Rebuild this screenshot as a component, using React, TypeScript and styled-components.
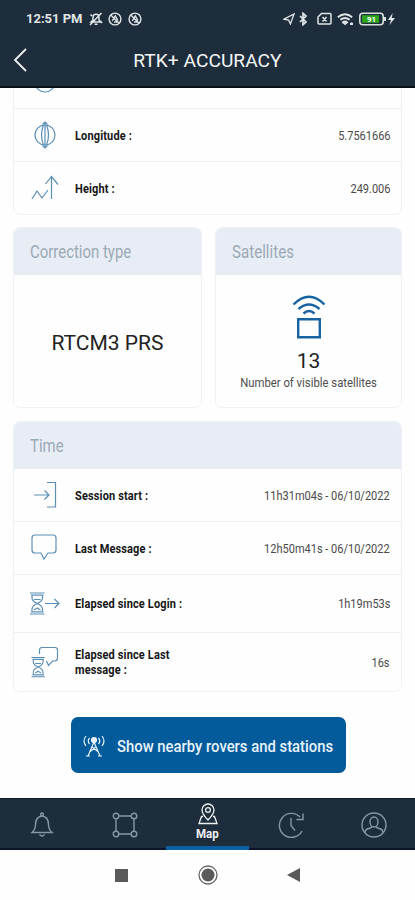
import React from "react";
import styled, { createGlobalStyle } from "styled-components";

const GlobalStyle = createGlobalStyle`
  * { box-sizing: border-box; }
  body { margin: 0; background: #fefefe; font-family: Roboto, "Liberation Sans", sans-serif; }
`;

const Screen = styled.div`
  width: 415px;
  height: 900px;
  display: flex;
  flex-direction: column;
  overflow: hidden;
  background: #fefefe;
`;

const Header = styled.header`
  height: 88px;
  flex: none;
  background: #1e2d3b;
  border-bottom: 2px solid #080f16;
`;

const StatusBar = styled.div`
  height: 38px;
  padding: 0 19px 0 26px;
  display: flex;
  align-items: center;
  justify-content: space-between;
`;

const StatusGroup = styled.div<{ $gap: number }>`
  display: flex;
  align-items: center;
  gap: ${(p) => p.$gap}px;
  color: #e0e5e8;
`;

const Clock = styled.span`
  font-size: 13px;
  font-weight: 700;
  width: 57px;
  white-space: nowrap;
  line-height: 16px;
`;

const TitleBar = styled.div`
  height: 44px;
  display: grid;
  grid-template-columns: 40px 1fr 40px;
  align-items: center;
`;

const Back = styled.button`
  padding: 0 0 0 13px;
  border: 0;
  background: none;
  display: flex;
`;

const Title = styled.h1`
  margin: 0;
  text-align: center;
  font-size: 19px;
  font-weight: 400;
  color: #f3f5f6;
  white-space: nowrap;
`;

const Main = styled.main`
  height: 710px;
  flex: none;
  overflow: hidden;
  padding: 0 13px;
  display: flex;
  flex-direction: column;
`;

const Card = styled.section<{ $clipped?: boolean }>`
  flex: none;
  overflow: hidden;
  border: 1px solid #eff2f4;
  border-radius: 7px;
  background: #fefefe;
  margin-top: ${(p) => (p.$clipped ? -34 : 13)}px;
`;

const CardPair = styled.div`
  display: grid;
  grid-template-columns: 189px 187px;
  gap: 13px;
  margin-top: -1px;

  & > section { height: 181px; }
`;

const CardHeader = styled.div`
  height: 47px;
  padding: 1px 0 0 16px;
  display: flex;
  align-items: center;
  background: #e8edf5;
`;

const Condensed = styled.span<{ $scale?: number; $from?: string }>`
  display: inline-block;
  white-space: nowrap;
  transform: scaleX(${(p) => p.$scale ?? 0.88});
  transform-origin: ${(p) => p.$from ?? "left"} center;
`;

const CardTitle = styled(Condensed)`
  font-size: 18px;
  line-height: 22px;
  color: #9ba9b5;
`;

const CardBody = styled.div<{ $top: number }>`
  padding-top: ${(p) => p.$top}px;
  display: flex;
  flex-direction: column;
  align-items: center;
`;

const Figure = styled.div<{ $gap?: number }>`
  margin-top: ${(p) => p.$gap ?? 0}px;
  font-size: 21px;
  line-height: 24px;
  color: #222;
  white-space: nowrap;
`;

const Caption = styled(Condensed)`
  font-size: 12.5px;
  line-height: 18px;
  margin-top: 1px;
  color: #4d4d4d;
`;

const Row = styled.div<{ $h: number }>`
  height: ${(p) => p.$h}px;
  display: grid;
  grid-template-columns: 61px 1fr auto;
  align-items: center;
  padding-right: 11px;

  & + & { border-top: 1px solid #edf0f2; }
  & > svg { margin-left: 15px; }
`;

const Label = styled(Condensed)`
  font-size: 12.5px;
  line-height: 15px;
  font-weight: 700;
  letter-spacing: 0.16px;
  color: #151515;
  white-space: pre-line;
`;

const Value = styled(Condensed)`
  font-size: 12.5px;
  line-height: 15px;
  color: #4a4a4a;
`;

const ActionButton = styled.button`
  flex: none;
  align-self: center;
  width: 275px;
  height: 56px;
  margin: 25px 0 0 2px;
  padding: 1px 0 0 11px;
  border: 0;
  border-radius: 7px;
  background: #045b9b;
  display: flex;
  align-items: center;
  gap: 11px;
  font-family: inherit;
  font-size: 17px;
  font-weight: 500;
  color: #e8f2f9;

  & > svg { flex: none; }
`;

const Tabs = styled.nav`
  height: 52px;
  flex: none;
  display: grid;
  grid-template-columns: repeat(5, 1fr);
  background: #1e2d3b;
  border-top: 1px solid #101b25;
`;

const Tab = styled.div<{ $active?: boolean }>`
  display: flex;
  flex-direction: column;
  align-items: center;
  justify-content: ${(p) => (p.$active ? "flex-start" : "center")};
  padding-top: ${(p) => (p.$active ? 4 : 3)}px;
  border-bottom: ${(p) => (p.$active ? "4px solid #0b60a5" : "2px solid #0b1429")};
  color: ${(p) => (p.$active ? "#eef1f3" : "#8797a5")};
  font-size: 12.5px;
  font-weight: 700;
  line-height: 18px;
`;

const SystemBar = styled.div`
  flex: 1;
  padding: 0 115px;
  display: flex;
  align-items: center;
  justify-content: space-between;
`;

type DrawingProps = {
  w: number;
  h: number;
  color?: string;
  sw?: number;
  children: React.ReactNode;
};

const Drawing = ({ w, h, color = "currentColor", sw = 1.2, children }: DrawingProps) => (
  <svg width={w} height={h} viewBox={`0 0 ${w} ${h}`} fill="none" stroke={color} strokeWidth={sw}>
    {children}
  </svg>
);

const BLUE = "#5c8fb6";

const RowIcon = ({ children }: { children: React.ReactNode }) => (
  <Drawing w={32} h={32} color={BLUE}>{children}</Drawing>
);

const Hourglass = () => (
  <>
    <path d="M0 0.5h14.5M0 21.5h14.5M1 2.6h12.5M1 19.4h12.5" />
    <path d="M2 3v2.500q0 3 5.200 5.500-5.200 2.500-5.200 5.500V19M12.500 3v2.500q0 3-5.200 5.500 5.200 2.500 5.200 5.500V19M4 7h6.500M4 17.500l3.200-2 3.300 2" />
  </>
);

const Crossed = () => (
  <Drawing w={14} h={14} sw={1.4}>
    <circle cx="7" cy="7" r="5.9" />
    <path d="M3 3.2l8 8M4.3 8.8l3-5 2.6 4.7M6 10h3" />
  </Drawing>
);

const App = () => (
  <>
    <GlobalStyle />
    <Screen>
      <Header>
        <StatusBar>
          <StatusGroup $gap={5.5}>
            <Clock>12:51 PM</Clock>
            <Drawing w={14} h={14} sw={1.5}>
              <path d="M2 10h9.5L10 8V5.2a3 3 0 0 0-6 0V8zM5.5 12.2h3M12.5 1L1 13M1.500 2.500L3 4M11.500 9l1.500 2" />
            </Drawing>
            <Crossed />
            <Crossed />
          </StatusGroup>
          <StatusGroup $gap={0}>
            <Drawing w={12} h={12} sw={1.3}>
              <path d="M1 6.2L11 1 7.4 11 5.6 7z" />
            </Drawing>
            <Drawing w={22} h={14} sw={1.7}>
              <path d="M5 4l6 6-3 2.7V1.3l3 2.7-6 6" />
            </Drawing>
            <Drawing w={20} h={14} sw={1.5}>
              <path d="M4.5 1.5h8.5q1 0 1 1v8.500q0 1-1 1H2q-1 0-1-1V5zM5.500 5l4 4.500M9.500 5l-4 4.500" />
            </Drawing>
            <Drawing w={22} h={14} sw={1.9}>
              <path d="M.8 5.200q7.200-6 14.400 0M3.400 7.800q4.600-3.700 9.200 0M6 10.200q2-1.500 4 0L8 12z" />
              <path d="M13 12h3M14.500 10.500v2.500" />
            </Drawing>
            <svg width="27" height="14" viewBox="0 0 27 14">
              <rect x=".8" y="1.300" width="23.400" height="11.400" rx="3" fill="none" stroke="#d8dfdf" strokeWidth="1.600" />
              <path d="M26 5v4" stroke="#d8dfdf" strokeWidth="2" />
              <rect x="3" y="3.200" width="17" height="7.600" fill="#2fa51e" />
              <text x="12.500" y="10" textAnchor="middle" fontSize="8" fontWeight="700" fill="#fff">91</text>
            </svg>
            <svg width="10" height="14" viewBox="0 0 10 14">
              <path d="M6.700 1L2 8h3l-1.600 5L9 6H5.700z" fill="currentColor" />
            </svg>
          </StatusGroup>
        </StatusBar>
        <TitleBar>
          <Back aria-label="Back">
            <Drawing w={15} h={24} color="#eef2f4" sw={1.8}>
              <path d="M13 1L2 12l11 11" />
            </Drawing>
          </Back>
          <Title><Condensed $from="center" $scale={1.01}>RTK+ ACCURACY</Condensed></Title>
        </TitleBar>
      </Header>

      <Main>
        <Card $clipped>
          <Row $h={53}>
            <RowIcon>
              <circle cx="16" cy="16" r="10" />
              <ellipse cx="16" cy="16" rx="13" ry="4" />
            </RowIcon>
          </Row>
          <Row $h={53}>
            <RowIcon>
              <circle cx="16" cy="16" r="10" />
              <path d="M14.500 6q-4 10 0 20M17.500 6q4 10 0 20M16 3v26M13.500 5.500L16 3l2.500 2.500M13.500 26.500L16 29l2.500-2.500" />
            </RowIcon>
            <Label>Longitude :</Label>
            <Value $from="right">5.7561666</Value>
          </Row>
          <Row $h={53}>
            <RowIcon>
              <path d="M3 27l5-8 5 7 6-8M22.500 27V5M16.500 12l6-7.500 6.500 8" />
            </RowIcon>
            <Label>Height :</Label>
            <Value $from="right">249.006</Value>
          </Row>
        </Card>

        <CardPair>
          <Card>
            <CardHeader><CardTitle $scale={0.83}>Correction type</CardTitle></CardHeader>
            <CardBody $top={56}><Figure>RTCM3 PRS</Figure></CardBody>
          </Card>
          <Card>
            <CardHeader><CardTitle $scale={0.84}>Satellites</CardTitle></CardHeader>
            <CardBody $top={19}>
              <Drawing w={34} h={45} color="#1762a0" sw={2.4}>
                <path d="M1.500 10.500Q17-5 32.500 10.500M6.500 15q10.500-9 21 0M11.500 19.500q5.500-5 11 0" />
                <path d="M6.200 25.200h21.600v18H6.200z" />
              </Drawing>
              <Figure $gap={10}>13</Figure>
              <Caption $from="center" $scale={0.905}>Number of visible satellites</Caption>
            </CardBody>
          </Card>
        </CardPair>

        <Card>
          <CardHeader><CardTitle $scale={0.83}>Time</CardTitle></CardHeader>
          <Row $h={52}>
            <RowIcon>
              <path d="M5 16h15M15.500 11.500L20 16l-4.500 4.500" />
              <path d="M18 3.500h8.500V28H18" />
            </RowIcon>
            <Label>Session start :</Label>
            <Value $from="right">11h31m04s - 06/10/2022</Value>
          </Row>
          <Row $h={53}>
            <RowIcon>
              <path d="M6 3h18q3 0 3 3v12q0 3-3 3h-5l-4 6-3-6H6q-3 0-3-3V6q0-3 3-3z" />
            </RowIcon>
            <Label>Last Message :</Label>
            <Value $from="right">12h50m41s - 06/10/2022</Value>
          </Row>
          <Row $h={58}>
            <RowIcon>
              <g transform="translate(1 4.500)"><Hourglass /></g>
              <path d="M16 15.500h14M25.500 11l4.500 4.500-4.500 4.500" />
            </RowIcon>
            <Label>Elapsed since Login :</Label>
            <Value $from="right">1h19m53s</Value>
          </Row>
          <Row $h={59}>
            <RowIcon>
              <g transform="translate(2.500 11) scale(.92)"><Hourglass /></g>
              <path d="M10.500 8V4q0-2.500 2.500-2.500h13q2.500 0 2.500 2.500v8q0 3-3 3h-2l-4 4.500-2-4.500" />
            </RowIcon>
            <Label>{"Elapsed since Last\nmessage :"}</Label>
            <Value $from="right">16s</Value>
          </Row>
        </Card>

        <ActionButton>
          <Drawing w={24} h={24}>
            <path d="M4 2q-4 5 0 10M20 2q4 5 0 10M7.500 4q-2.500 3 0 6M16.500 4q2.500 3 0 6M12 8L6 22M12 8l6 14M10 13l6.500 5M14 13l-6.500 5M4 22h4M16 22h4" />
            <circle cx="12" cy="6" r="2.500" fill="currentColor" />
          </Drawing>
          <Condensed $scale={0.873}>Show nearby rovers and stations</Condensed>
        </ActionButton>
      </Main>

      <Tabs>
        <Tab>
          <Drawing w={24} h={28} sw={1.4}>
            <path d="M2 21.500q3.500-3 3.500-8 0-7.500 6.500-8.500 6.500 1 6.500 8.500 0 5 3.500 8zM9.500 23.500q2.500 3 5 0" />
            <circle cx="12" cy="3.400" r="1.400" />
          </Drawing>
        </Tab>
        <Tab>
          <Drawing w={26} h={26} sw={1.4}>
            <path d="M7 4h12M22 7v12M19 22H7M4 19V7" />
            <circle cx="4" cy="4" r="2.800" />
            <circle cx="22" cy="4" r="2.800" />
            <circle cx="4" cy="22" r="2.800" />
            <circle cx="22" cy="22" r="2.800" />
          </Drawing>
        </Tab>
        <Tab $active>
          <Drawing w={20} h={22} sw={1.300}>
            <path d="M10 17Q4 11 4 7a6 6 0 0 1 12 0q0 4-6 10zM5 13.500H3.500L1 20.500h18l-2.500-7H15" />
            <circle cx="10" cy="7" r="2.400" />
          </Drawing>
          <Condensed $from="center" $scale={0.92}>Map</Condensed>
        </Tab>
        <Tab>
          <Drawing w={28} h={28} sw={1.400}>
            <path d="M23 6A12 12 0 1 0 25 20M26 2.500v6h-6.500M14 7v7.500l4 5" />
          </Drawing>
        </Tab>
        <Tab>
          <Drawing w={28} h={28} sw={1.400}>
            <circle cx="14" cy="14" r="12" />
            <ellipse cx="14" cy="11" rx="4" ry="5" />
            <path d="M5 22q0-4 4-4.500l3-1.500M23 22q0-4-4-4.500L16 16" />
          </Drawing>
        </Tab>
      </Tabs>

      <SystemBar>
        <svg width="13" height="13"><rect width="13" height="13" fill="#5a5a5a" /></svg>
        <svg width="20" height="20">
          <circle cx="10" cy="10" r="9" fill="none" stroke="#666" strokeWidth="1.300" />
          <circle cx="10" cy="10" r="6.500" fill="#5a5a5a" />
        </svg>
        <svg width="13" height="14"><path d="M0 7L13 0v14z" fill="#5a5a5a" /></svg>
      </SystemBar>
    </Screen>
  </>
);

export default App;
